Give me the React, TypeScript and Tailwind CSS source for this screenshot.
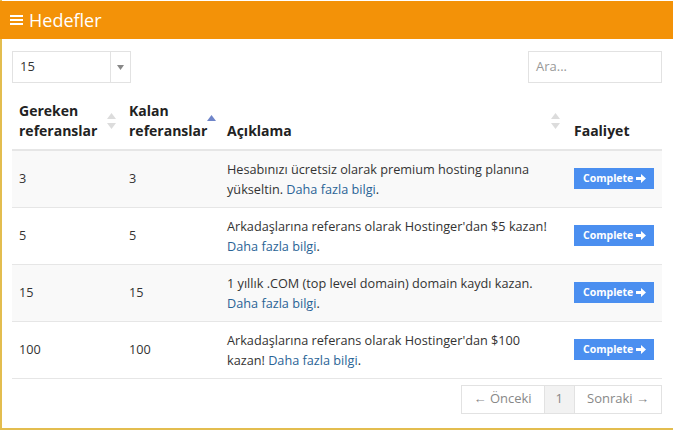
import React from "react";

const rows = [
  { req: "3", left: "3", text: "Hesabınızı ücretsiz olarak premium hosting planına yükseltin.", striped: true },
  { req: "5", left: "5", text: "Arkadaşlarına referans olarak Hostinger'dan $5 kazan!", striped: false },
  { req: "15", left: "15", text: "1 yıllık .COM (top level domain) domain kaydı kazan.", striped: true },
  { req: "100", left: "100", text: "Arkadaşlarına referans olarak Hostinger'dan $100 kazan!", striped: false },
];

function SortIcon({ active }: { active?: boolean }) {
  if (active) {
    return (
      <svg width="9" height="6" viewBox="0 0 9 6" className="shrink-0">
        <path d="M4.5 0 L9 6 L0 6 Z" fill="#6f85c9" />
      </svg>
    );
  }
  return (
    <svg width="9" height="16" viewBox="0 0 9 16" className="shrink-0">
      <path d="M4.5 0 L9 6 L0 6 Z" fill="#dcdcdc" />
      <path d="M4.5 16 L9 10 L0 10 Z" fill="#dcdcdc" />
    </svg>
  );
}

export default function App() {
  return (
    <div
      className="w-[673px] h-[430px] bg-white text-[#333] overflow-hidden"
      style={{ fontFamily: '"Open Sans", sans-serif' }}
    >
      <div className="h-full flex flex-col border-l-2 border-b-2 border-[#e3bd4f]">
        <div className="h-[38px] mt-[1px] bg-[#f39208] flex items-center pl-[8px] gap-[5px] text-white -ml-[2px]">
          <svg width="14" height="12" viewBox="0 0 14 12" className="ml-[2px]">
            <rect x="0" y="1" width="13" height="2" fill="white" />
            <rect x="0" y="5" width="13" height="2" fill="white" />
            <rect x="0" y="9" width="13" height="2" fill="white" />
          </svg>
          <span className="text-[18px] leading-none">Hedefler</span>
        </div>

        <div className="flex-1 pl-[10px] pr-[11px] pt-[12px]">
          <div className="flex justify-between items-start">
            <div className="w-[119px] h-[32px] border border-[#e2e2e2] flex text-[13px]">
              <div className="flex-1 flex items-center pl-[7px]">15</div>
              <div className="w-[20px] border-l border-[#e2e2e2] flex items-center justify-center">
                <svg width="7" height="5" viewBox="0 0 7 5">
                  <path d="M0 0 L7 0 L3.5 5 Z" fill="#888" />
                </svg>
              </div>
            </div>
            <div className="w-[134px] h-[32px] border border-[#e2e2e2] flex items-center pl-[7px] text-[13px] text-[#999]">
              Ara...
            </div>
          </div>

          <table className="w-full table-fixed mt-[18px] border-collapse text-[12.7px]">
            <colgroup>
              <col className="w-[110px]" />
              <col className="w-[98px]" />
              <col />
              <col className="w-[95px]" />
            </colgroup>
            <thead>
              <tr className="border-b-2 border-[#e6e6e6] text-[14px] font-bold text-[#222]">
                <th className="text-left font-bold pl-[7px] pr-[6px] pb-[8px] pt-0 align-bottom">
                  <div className="flex items-center justify-between leading-[20px]">
                    <span>Gereken<br />referanslar</span>
                    <SortIcon />
                  </div>
                </th>
                <th className="text-left font-bold pl-[7px] pr-[8px] pb-[8px] align-bottom">
                  <div className="flex items-start justify-between leading-[20px]">
                    <span>Kalan<br />referanslar</span>
                    <span className="mt-[14px]"><SortIcon active /></span>
                  </div>
                </th>
                <th className="text-left font-bold px-[7px] pb-[8px] align-bottom">
                  <div className="flex items-end justify-between leading-[20px]">
                    <span>Açıklama</span>
                    <span className="mb-[12px]"><SortIcon /></span>
                  </div>
                </th>
                <th className="text-left font-bold px-[7px] pb-[8px] align-bottom leading-[20px]">
                  Faaliyet
                </th>
              </tr>
            </thead>
            <tbody>
              {rows.map((r, i) => (
                <tr
                  key={i}
                  className={`h-[57px] border-b border-[#e6e6e6] ${r.striped ? "bg-[#f9f9f9]" : "bg-white"}`}
                >
                  <td className="px-[7px] align-middle">{r.req}</td>
                  <td className="px-[7px] align-middle">{r.left}</td>
                  <td className="px-[7px] align-middle leading-[20px]">
                    {r.text} <a className="text-[#2a6496]">Daha fazla bilgi</a>.
                  </td>
                  <td className="px-[7px] align-middle">
                    <span className="inline-flex items-center gap-[3px] bg-[#4b8ff0] text-white text-[10.5px] font-bold h-[21px] pl-[9px] pr-[8px]">
                      Complete
                      <svg width="10" height="9" viewBox="0 0 10 9">
                        <path d="M0 3 H5 V0 L10 4.5 L5 9 V6 H0 Z" fill="white" />
                      </svg>
                    </span>
                  </td>
                </tr>
              ))}
            </tbody>
          </table>

          <div className="flex justify-end mt-[6px]">
            <div className="flex h-[29px] border border-[#e2e2e2] text-[13px] text-[#888]">
              <div className="px-[12px] flex items-center">← Önceki</div>
              <div className="px-[11px] flex items-center bg-[#f2f2f2] border-x border-[#e2e2e2]">1</div>
              <div className="px-[12px] flex items-center">Sonraki →</div>
            </div>
          </div>
        </div>
      </div>
    </div>
  );
}
